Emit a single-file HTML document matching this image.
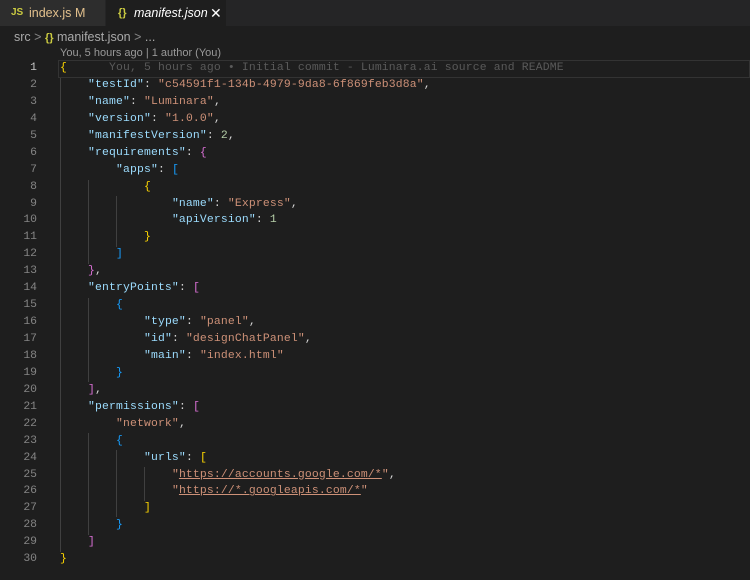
<!DOCTYPE html>
<html><head><meta charset="utf-8"><style>
*{margin:0;padding:0;box-sizing:border-box}
body{width:750px;height:573px;background:#1e1e1e;overflow:hidden;font-family:"Liberation Sans",sans-serif;position:relative}
.tabs{position:absolute;left:0;top:0;width:750px;height:26px;background:#252526}
.tab{position:absolute;top:0;height:26px;font-size:12.5px;line-height:26px}
.t1{left:0;width:105px;background:#2d2d2d;color:#e2c08d}
.t2{left:106px;width:120px;background:#1e1e1e;color:#fff;font-style:italic}
.crumb{position:absolute;left:14px;top:30px;font-size:12.5px;color:#a9a9a9}
.lens{position:absolute;left:60px;top:47px;font-size:11px;color:#999}
.code{position:absolute;left:0;top:60px;width:750px;height:520px;font-family:"Liberation Mono",monospace;font-size:11.4px;letter-spacing:0.16px;line-height:16.93px;white-space:pre}
.ln{position:absolute;left:0;top:0;width:37px;text-align:right;color:#858585;letter-spacing:0}
.src{position:absolute;left:60px;top:0;color:#d4d4d4}
.k{color:#9cdcfe}.s{color:#ce9178}.n{color:#b5cea8}.y{color:#ffd700}.p{color:#da70d6}.b{color:#179fff}
.u{text-decoration:underline}
.g{position:absolute;width:1px;background:#404040}
.cur{position:absolute;left:58px;top:60px;width:692px;height:18px;border:1px solid #333}
</style></head><body>
<div class="tabs">
<div class="tab t1"><span style="position:absolute;left:11px;font-weight:bold;font-size:10px;color:#cbcb41">JS</span><span style="position:absolute;left:29px">index.js</span><span style="position:absolute;left:75px">M</span></div>
<div class="tab t2"><span style="position:absolute;left:12px;font-style:normal;font-weight:bold;color:#cbcb41;font-size:11px">{}</span><span style="position:absolute;left:28px">manifest.json</span><span style="position:absolute;left:104px;font-style:normal;font-size:14px">✕</span></div>
</div>
<div class="crumb">src <span style="color:#888">&gt;</span> <b style="color:#cbcb41;font-size:11px">{}</b> manifest.json <span style="color:#888">&gt;</span> ...</div>
<div class="lens">You, 5 hours ago | 1 author (You)</div>
<div class="cur"></div>
<div class="g" style="left:60px;top:78px;height:474px"></div>
<div class="g" style="left:88px;top:180px;height:84px"></div>
<div class="g" style="left:116px;top:196px;height:51px"></div>
<div class="g" style="left:88px;top:298px;height:84px"></div>
<div class="g" style="left:88px;top:433px;height:102px"></div>
<div class="g" style="left:116px;top:450px;height:67px"></div>
<div class="g" style="left:144px;top:467px;height:34px"></div>
<div class="code"><div class="ln"><span style="color:#c6c6c6">1</span>
2
3
4
5
6
7
8
9
10
11
12
13
14
15
16
17
18
19
20
21
22
23
24
25
26
27
28
29
30</div><div class="src"><span class="y">{</span>      <span style="color:#5a5a5a">You, 5 hours ago • Initial commit - Luminara.ai source and README</span>
    <span class="k">"testId"</span>: <span class="s">"c54591f1-134b-4979-9da8-6f869feb3d8a"</span>,
    <span class="k">"name"</span>: <span class="s">"Luminara"</span>,
    <span class="k">"version"</span>: <span class="s">"1.0.0"</span>,
    <span class="k">"manifestVersion"</span>: <span class="n">2</span>,
    <span class="k">"requirements"</span>: <span class="p">{</span>
        <span class="k">"apps"</span>: <span class="b">[</span>
            <span class="y">{</span>
                <span class="k">"name"</span>: <span class="s">"Express"</span>,
                <span class="k">"apiVersion"</span>: <span class="n">1</span>
            <span class="y">}</span>
        <span class="b">]</span>
    <span class="p">}</span>,
    <span class="k">"entryPoints"</span>: <span class="p">[</span>
        <span class="b">{</span>
            <span class="k">"type"</span>: <span class="s">"panel"</span>,
            <span class="k">"id"</span>: <span class="s">"designChatPanel"</span>,
            <span class="k">"main"</span>: <span class="s">"index.html"</span>
        <span class="b">}</span>
    <span class="p">]</span>,
    <span class="k">"permissions"</span>: <span class="p">[</span>
        <span class="s">"network"</span>,
        <span class="b">{</span>
            <span class="k">"urls"</span>: <span class="y">[</span>
                <span class="s">"<span class="u">https://accounts.google.com/*</span>"</span>,
                <span class="s">"<span class="u">https://*.googleapis.com/*</span>"</span>
            <span class="y">]</span>
        <span class="b">}</span>
    <span class="p">]</span>
<span class="y">}</span></div></div>
</body></html>
